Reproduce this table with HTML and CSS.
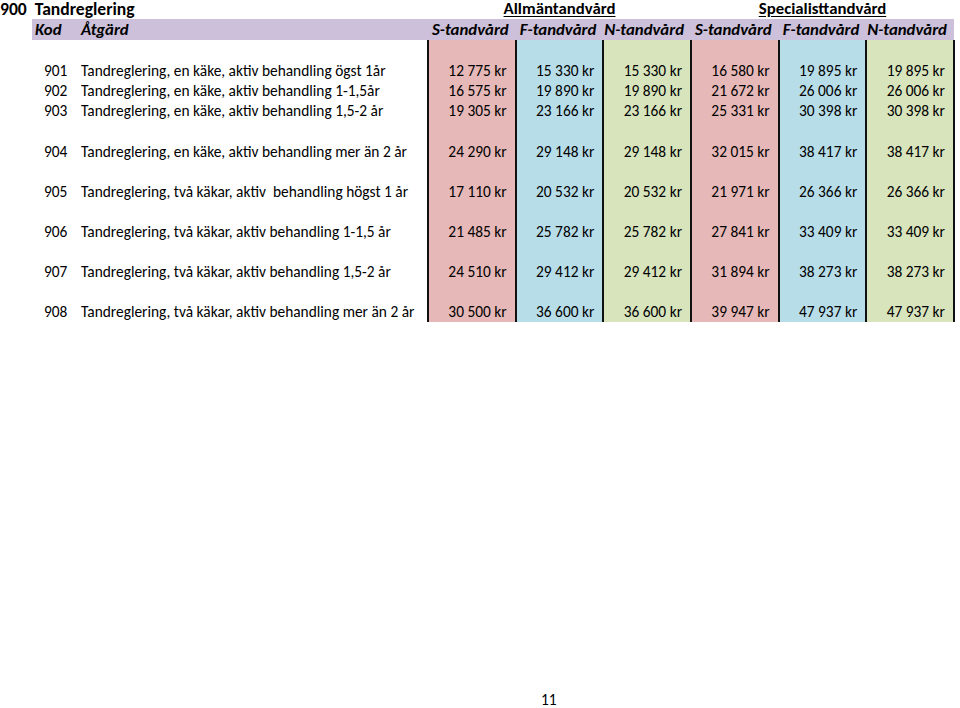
FILE: index.html
```html
<!DOCTYPE html>
<html lang="sv">
<head>
<meta charset="utf-8">
<title>900 Tandreglering</title>
<link rel="stylesheet" href="styles.css">
</head>
<body>
<div class="page">
<table class="prices">
  <colgroup>
    <col class="c-gap"><col class="c-code"><col class="c-act">
    <col class="c-num"><col class="c-num"><col class="c-num"><col class="c-num"><col class="c-num"><col class="c-num">
  </colgroup>
  <tr class="r-title">
    <td colspan="3" class="title"><span class="t-code">900</span>Tandreglering</td>
    <td colspan="3" class="group"><span>Allmäntandvård</span></td>
    <td colspan="3" class="group"><span>Specialisttandvård</span></td>
  </tr>
  <tr class="r-head">
    <td class="blank"></td>
    <th class="code">Kod</th>
    <th class="act">Åtgärd</th>
    <th>S-tandvård</th><th>F-tandvård</th><th>N-tandvård</th>
    <th>S-tandvård</th><th>F-tandvård</th><th>N-tandvård</th>
  </tr>
  <tr class="r-space"><td></td><td></td><td></td><td class="s"></td><td class="f"></td><td class="n"></td><td class="s"></td><td class="f"></td><td class="n last"></td></tr>
  <tr class="r-data"><td></td><td class="code">901</td><td class="act">Tandreglering, en käke, aktiv behandling ögst 1år</td><td class="s">12 775 kr</td><td class="f">15 330 kr</td><td class="n">15 330 kr</td><td class="s">16 580 kr</td><td class="f">19 895 kr</td><td class="n last">19 895 kr</td></tr>
  <tr class="r-data"><td></td><td class="code">902</td><td class="act">Tandreglering, en käke, aktiv behandling 1-1,5år</td><td class="s">16 575 kr</td><td class="f">19 890 kr</td><td class="n">19 890 kr</td><td class="s">21 672 kr</td><td class="f">26 006 kr</td><td class="n last">26 006 kr</td></tr>
  <tr class="r-data"><td></td><td class="code">903</td><td class="act">Tandreglering, en käke, aktiv behandling 1,5-2 år</td><td class="s">19 305 kr</td><td class="f">23 166 kr</td><td class="n">23 166 kr</td><td class="s">25 331 kr</td><td class="f">30 398 kr</td><td class="n last">30 398 kr</td></tr>
  <tr class="r-space"><td></td><td></td><td></td><td class="s"></td><td class="f"></td><td class="n"></td><td class="s"></td><td class="f"></td><td class="n last"></td></tr>
  <tr class="r-data"><td></td><td class="code">904</td><td class="act">Tandreglering, en käke, aktiv behandling mer än 2 år</td><td class="s">24 290 kr</td><td class="f">29 148 kr</td><td class="n">29 148 kr</td><td class="s">32 015 kr</td><td class="f">38 417 kr</td><td class="n last">38 417 kr</td></tr>
  <tr class="r-gap"><td></td><td></td><td></td><td class="s"></td><td class="f"></td><td class="n"></td><td class="s"></td><td class="f"></td><td class="n last"></td></tr>
  <tr class="r-data"><td></td><td class="code">905</td><td class="act">Tandreglering, två käkar, aktiv&nbsp; behandling högst 1 år</td><td class="s">17 110 kr</td><td class="f">20 532 kr</td><td class="n">20 532 kr</td><td class="s">21 971 kr</td><td class="f">26 366 kr</td><td class="n last">26 366 kr</td></tr>
  <tr class="r-gap"><td></td><td></td><td></td><td class="s"></td><td class="f"></td><td class="n"></td><td class="s"></td><td class="f"></td><td class="n last"></td></tr>
  <tr class="r-data"><td></td><td class="code">906</td><td class="act">Tandreglering, två käkar, aktiv behandling 1-1,5 år</td><td class="s">21 485 kr</td><td class="f">25 782 kr</td><td class="n">25 782 kr</td><td class="s">27 841 kr</td><td class="f">33 409 kr</td><td class="n last">33 409 kr</td></tr>
  <tr class="r-gap"><td></td><td></td><td></td><td class="s"></td><td class="f"></td><td class="n"></td><td class="s"></td><td class="f"></td><td class="n last"></td></tr>
  <tr class="r-data"><td></td><td class="code">907</td><td class="act">Tandreglering, två käkar, aktiv behandling 1,5-2 år</td><td class="s">24 510 kr</td><td class="f">29 412 kr</td><td class="n">29 412 kr</td><td class="s">31 894 kr</td><td class="f">38 273 kr</td><td class="n last">38 273 kr</td></tr>
  <tr class="r-gap"><td></td><td></td><td></td><td class="s"></td><td class="f"></td><td class="n"></td><td class="s"></td><td class="f"></td><td class="n last"></td></tr>
  <tr class="r-data"><td></td><td class="code">908</td><td class="act">Tandreglering, två käkar, aktiv behandling mer än 2 år</td><td class="s">30 500 kr</td><td class="f">36 600 kr</td><td class="n">36 600 kr</td><td class="s">39 947 kr</td><td class="f">47 937 kr</td><td class="n last">47 937 kr</td></tr>
</table>
<div class="pageno">11</div>
</div>
</body>
</html>
```
FILE: styles.css
```css
html, body {
  margin: 0;
  padding: 0;
  background: #ffffff;
}
body {
  font-family: "Carlito", "Calibri", "Open Sans", "Liberation Sans", sans-serif;
  color: #000000;
  font-size: 15.4px;
}
.page {
  width: 960px;
  height: 708px;
  overflow: hidden;
}
.prices {
  table-layout: fixed;
  border-collapse: collapse;
  width: 954px;
}
.c-gap { width: 32px; }
.c-code { width: 44px; }
.c-act { width: 352px; }
.c-num { width: 87.67px; }
.prices td, .prices th {
  padding: 0;
  white-space: nowrap;
  overflow: visible;
  vertical-align: middle;
  line-height: 18px;
}
.r-title td { height: 19px; vertical-align: top; }
.title {
  font-weight: bold;
  font-size: 17.6px;
  line-height: 19px;
}
.t-code { margin-right: 8px; }
.group {
  text-align: center;
  font-weight: bold;
  font-size: 16.8px;
  line-height: 18px;
}
.group span { text-decoration: underline; text-underline-offset: 2px; }
.r-head td.blank { background: #ffffff; }
.r-head th {
  height: 21px;
  background: #ccc0da;
  font-style: italic;
  font-weight: bold;
  font-size: 16.8px;
  text-align: right;
  padding-right: 7px;
}
.r-head th.code { text-align: left; padding-left: 3px; padding-right: 0; }
.r-head th.act { text-align: left; padding-left: 5px; }
.r-space td { height: 21px; }
.r-gap td { height: 20px; }
.r-data td { height: 20px; text-align: right; padding-right: 8px; }
.r-data td.code { text-align: left; padding-left: 12px; padding-right: 0; }
.r-data td.act { text-align: left; padding-left: 5px; padding-right: 0; }
.s { background: #e6b8b7; border-left: 2px solid #111; }
.f { background: #b7dde8; border-left: 2px solid #111; }
.n { background: #d7e4bc; border-left: 2px solid #111; }
.last { border-right: 2px solid #111; }
.pageno {
  margin-top: 369px;
  padding-left: 541px;
  font-size: 15.4px;
  line-height: 18px;
}
```
